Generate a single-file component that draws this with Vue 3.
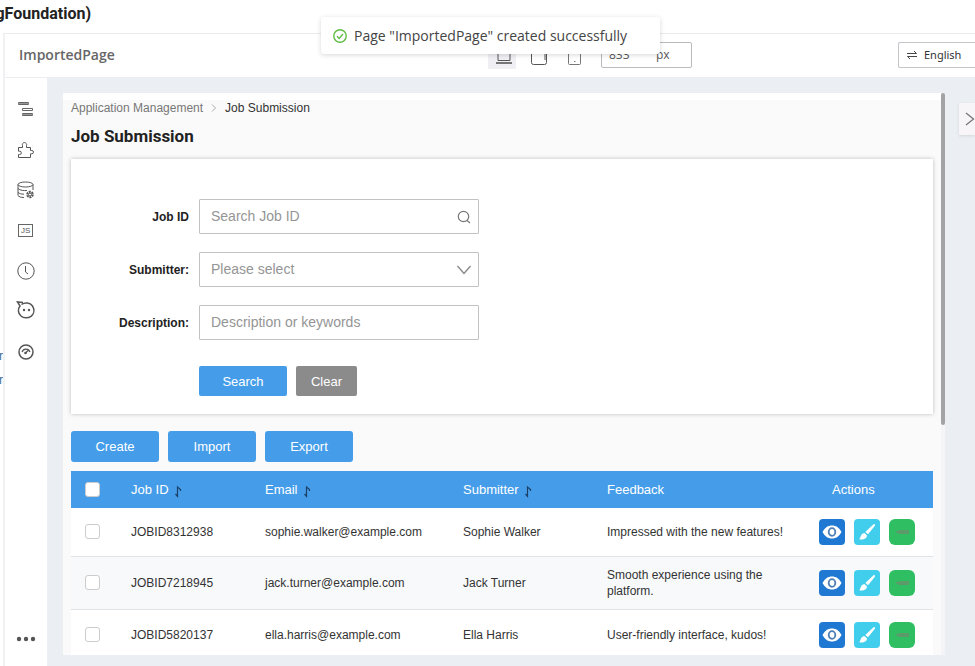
<script setup>
import { ref } from 'vue'

const jobId = ref('')
const submitter = ref('')
const description = ref('')
const width = ref('833')

const rows = [
  { id: 'JOBID8312938', email: 'sophie.walker@example.com', name: 'Sophie Walker', feedback: 'Impressed with the new features!' },
  { id: 'JOBID7218945', email: 'jack.turner@example.com', name: 'Jack Turner', feedback: 'Smooth experience using the platform.' },
  { id: 'JOBID5820137', email: 'ella.harris@example.com', name: 'Ella Harris', feedback: 'User-friendly interface, kudos!' }
]
const sortable = ['Job ID', 'Email', 'Submitter']
</script>

<template>
  <div class="shell">
    <header class="topbar"><span class="project">gFoundation)</span></header>
    <div class="body">
      <aside class="tree"><span>r</span><span>r</span></aside>
      <div class="designer">
        <div class="toolbar">
          <h2 class="page-name">ImportedPage</h2>
          <div class="devices">
            <button class="device active" type="button" aria-label="Desktop">
              <svg width="18" height="18" viewBox="0 0 18 18" fill="none" stroke="#555"><path d="M3 2.5h12v11H3z" /><path d="M1 16h16" stroke-width="2" stroke="#777" /></svg>
            </button>
            <button class="device" type="button" aria-label="Tablet">
              <svg width="18" height="18" viewBox="0 0 18 18" fill="none" stroke="#555"><rect x="1.500" y="2.500" width="15" height="15" rx="2" /><path d="M15 7v6" stroke-width="1" /></svg>
            </button>
            <button class="device" type="button" aria-label="Phone">
              <svg width="18" height="18" viewBox="0 0 18 18" fill="none" stroke="#777"><rect x="3.500" y="1.500" width="12" height="16" rx="1" /><path d="M9 14.500h1.500" /></svg>
            </button>
            <div class="size"><input v-model="width" aria-label="Width" /><span>px</span></div>
          </div>
          <div class="lang-area">
            <button class="lang" type="button">
              <svg width="10" height="10" viewBox="0 0 10 10" fill="none" stroke="#444"><path d="M0 3.500h9.500L7 1M10 6.500H.5L3 9" /></svg>
              English
            </button>
          </div>
        </div>
        <div class="workspace">
          <nav class="rail">
            <button type="button" aria-label="Outline">
              <svg width="20" height="20" viewBox="0 0 20 20" fill="none" stroke="#666"><path d="M2.500 2.500h10v2h-10zM6.500 8.500h10v2h-10zM6.500 13.500h10v2h-10z" /><path d="M2.500 3.500h10M6.500 14.500h10" stroke="#999" /></svg>
            </button>
            <button type="button" aria-label="Components">
              <svg width="20" height="20" viewBox="0 0 20 20" fill="none" stroke="#555"><path d="M2.500 7.500h4V5.700a2.200 2.200 0 1 1 4 0v1.800h4v3h1.300a1.500 1.500 0 0 1 0 3.300h-1.300v3.700h-12v-3h1.200a1.600 1.600 0 0 0 0-3.300H2.500z" /></svg>
            </button>
            <button type="button" aria-label="Data sources">
              <svg width="20" height="20" viewBox="0 0 20 20" fill="none" stroke="#555"><ellipse cx="9.500" cy="4.500" rx="7.500" ry="2.500" /><path d="M2 4.500v11c1 1.300 3 2 6 2M17 4.500V10M2 8.500c2 2 6 2.300 9 2M2 12.500c1.500 1 3 1.700 6 1.700" /><circle cx="14" cy="14.500" r="2.800" stroke-width="2" stroke-dasharray="2 .9" /><circle cx="14" cy="14.500" r="1.500" /></svg>
            </button>
            <button type="button" aria-label="Scripts">
              <svg width="20" height="20" viewBox="0 0 20 20" fill="none" stroke="#666"><rect x="2.500" y="4.500" width="14" height="12" /><text x="5" y="13" font-size="8" fill="#555" stroke="none" font-family="Liberation Sans, sans-serif">JS</text></svg>
            </button>
            <button type="button" aria-label="History">
              <svg width="20" height="20" viewBox="0 0 20 20" fill="none" stroke="#555"><circle cx="10" cy="11" r="8.200" /><path d="M9.500 6v6l2.500 2" /></svg>
            </button>
            <button type="button" aria-label="Assistant">
              <svg width="20" height="20" viewBox="0 0 20 20" fill="none" stroke="#555" stroke-width="1.500"><path d="M5.500 4.500C9 2 14 2.500 16.500 6c2.500 4 1.300 8-1.500 10.300-3 2.200-7.500 2-10-.3C2 13.500 1.500 9 4 6L1.500 2l5.500.5" /><circle cx="8" cy="10" r="1.200" fill="#555" stroke="none" /><circle cx="13" cy="10" r="1.200" fill="#555" stroke="none" /></svg>
            </button>
            <button type="button" aria-label="Performance">
              <svg width="20" height="20" viewBox="0 0 20 20" fill="none" stroke="#555"><circle cx="10" cy="12" r="7" stroke-width="1.500" /><path d="M6 12a4.200 4.200 0 0 1 8 0M9.500 13l3-3" stroke-width="1.200" /><circle cx="9.500" cy="13" r="1.300" fill="#555" stroke="none" /></svg>
            </button>
            <button class="more" type="button" aria-label="More">
              <svg width="20" height="20" viewBox="0 0 20 20" fill="#555"><circle cx="3" cy="10" r="2.200" /><circle cx="10" cy="10" r="2.200" /><circle cx="17" cy="10" r="2.200" /></svg>
            </button>
          </nav>
          <div class="canvas">
            <main class="page">
              <nav class="crumbs">
                <a href="#">Application Management</a>
                <svg width="6" height="8" viewBox="0 0 6 8" fill="none" stroke="#aaa"><path d="M1 .5L4.500 4 1 7.500" /></svg>
                <span>Job Submission</span>
              </nav>
              <h1>Job Submission</h1>
              <form class="card" @submit.prevent>
                <div class="field">
                  <label for="job">Job ID</label>
                  <div class="control">
                    <input id="job" v-model="jobId" placeholder="Search Job ID" />
                    <svg width="14" height="14" viewBox="0 0 14 14" fill="none" stroke="#777" stroke-width="1.200"><circle cx="6.500" cy="6.500" r="5.200" /><path d="M10 10.500l3 2.500" /></svg>
                  </div>
                </div>
                <div class="field">
                  <label for="sub">Submitter:</label>
                  <div class="control">
                    <select id="sub" v-model="submitter">
                      <option value="">Please select</option>
                      <option v-for="r in rows" :key="r.id">{{ r.name }}</option>
                    </select>
                    <svg width="14" height="14" viewBox="0 0 14 14" fill="none" stroke="#888" stroke-width="1.300"><path d="M.5 3L7 10.500 13.500 3" /></svg>
                  </div>
                </div>
                <div class="field">
                  <label for="desc">Description:</label>
                  <div class="control">
                    <input id="desc" v-model="description" placeholder="Description or keywords" />
                  </div>
                </div>
                <div class="form-actions">
                  <button class="btn search" type="submit">Search</button>
                  <button class="btn clear" type="reset">Clear</button>
                </div>
              </form>
              <div class="bulk">
                <button class="btn" type="button">Create</button>
                <button class="btn" type="button">Import</button>
                <button class="btn" type="button">Export</button>
              </div>
              <table>
                <colgroup>
                  <col class="c-check" /><col class="c-id" /><col class="c-email" /><col class="c-name" /><col /><col class="c-actions" />
                </colgroup>
                <thead>
                  <tr>
                    <th class="check"><input type="checkbox" aria-label="Select all" /></th>
                    <th v-for="s in sortable" :key="s">
                      <span class="sort">{{ s }}
                        <svg width="8" height="14" viewBox="0 0 8 14" fill="none" stroke="#1c3f66" stroke-width="1.200"><path d="M1.500 10l2 2.300V3l3 2.500v1.500" /></svg>
                      </span>
                    </th>
                    <th>Feedback</th>
                    <th class="actions-head">Actions</th>
                  </tr>
                </thead>
                <tbody>
                  <tr v-for="r in rows" :key="r.id">
                    <td class="check"><input type="checkbox" :aria-label="'Select ' + r.id" /></td>
                    <td>{{ r.id }}</td>
                    <td>{{ r.email }}</td>
                    <td>{{ r.name }}</td>
                    <td>{{ r.feedback }}</td>
                    <td>
                      <div class="acts">
                        <button class="act view" type="button" aria-label="View">
                          <svg width="20" height="14" viewBox="0 0 20 14"><path d="M.5 7C3 2.500 6 .5 10 .5s7 2 9.500 6.500C17 11.500 14 13.500 10 13.500S3 11.500.5 7z" fill="#fff" /><ellipse cx="10" cy="7" rx="3.300" ry="3.800" fill="#fff" stroke="#4b7fb5" stroke-width="1.800" /></svg>
                        </button>
                        <button class="act edit" type="button" aria-label="Edit">
                          <svg width="18" height="18" viewBox="0 0 18 18" fill="#fff"><path d="M15.500 1.200c1-.6 2 .4 1.400 1.500L10 11.300 7.300 8.900zM6.300 10l2.600 2.200c.2 2.600-2 4.500-6.600 4.300-.8 0-1-.5-.6-1C2.900 14.300 2.300 10.900 6.300 10z" /></svg>
                        </button>
                        <button class="act run" type="button" aria-label="Run">
                          <svg width="14" height="6" viewBox="0 0 14 6" fill="#5d9a6a"><path d="M0 2.500L5 1h9v4H4z" /></svg>
                        </button>
                      </div>
                    </td>
                  </tr>
                </tbody>
              </table>
            </main>
            <div class="scroll"><span class="thumb"></span></div>
            <button class="expand" type="button" aria-label="Expand panel">
              <svg width="10" height="14" viewBox="0 0 10 14" fill="none" stroke="#777" stroke-width="1.300"><path d="M1 1l7.500 6L1 13" /></svg>
            </button>
          </div>
        </div>
      </div>
    </div>
    <div class="toast" role="status">
      <svg width="14" height="14" viewBox="0 0 14 14" fill="none" stroke="#5ebd45" stroke-width="1.400"><circle cx="7" cy="7" r="6.200" /><path d="M4 7.200l2.200 2.200L10 5" /></svg>
      Page "ImportedPage" created successfully
    </div>
  </div>
</template>

<style>
body { margin: 0; }
</style>

<style scoped>
* { box-sizing: border-box; }
button, input, select { font: inherit; margin: 0; }
button { border: 0; padding: 0; background: none; cursor: pointer; }
svg { display: block; flex: none; }
.shell { position: relative; display: flex; flex-direction: column; height: 100vh; overflow: hidden; background: #fff; font-family: "Liberation Sans", Arial, sans-serif; font-size: 13px; color: #333; }
.topbar { flex: none; height: 33px; padding-top: 4px; }
.project { display: flex; justify-content: flex-end; width: 91px; overflow: hidden; font: 700 16px/20px Roboto, sans-serif; color: #222; }
.body { flex: 1; display: flex; min-height: 0; }
.tree { flex: none; width: 3px; padding-top: 311px; display: flex; flex-direction: column; align-items: flex-end; overflow: hidden; font-size: 12px; line-height: 24px; color: #3f6a92; }
.designer { flex: 1; min-width: 0; display: flex; flex-direction: column; border-left: 2px solid #f0f1f3; border-top: 1px solid #ececef; }
.toolbar { flex: none; display: flex; align-items: center; height: 43px; padding: 0 0 2px 14px; }
.page-name { flex: 1; margin: 0; font: 600 14px/20px "Open Sans", sans-serif; color: #666; }
.devices { display: flex; align-items: center; gap: 7px; }
.device { display: flex; align-items: center; justify-content: flex-end; padding: 2px 3px 0 0; width: 28px; height: 28px; }
.device.active { background: #f0f0f4; }
.size { display: flex; align-items: center; width: 91px; height: 26px; margin-left: 8px; border: 1px solid #bbb; border-radius: 2px; font: 12px/18px "Open Sans", sans-serif; color: #555; }
.size input { width: 54px; border: 0; padding: 0 0 0 7px; background: none; color: inherit; outline: none; }
.lang-area { width: 283px; display: flex; justify-content: flex-end; }
.lang { display: flex; align-items: center; gap: 7px; width: 77px; height: 26px; padding-left: 8px; border: 1px solid #c4c6ca; border-right: 0; border-radius: 2px 0 0 2px; font: 11px/18px "Noto Sans", sans-serif; color: #333; }
.workspace { flex: 1; min-height: 0; display: flex; border-top: 1px solid #ececf1; }
.rail { flex: none; width: 42px; display: flex; flex-direction: column; align-items: center; gap: 20px; padding: 22px 0 17px; }
.rail button { height: 20px; }
.rail .more { margin-top: auto; }
.canvas { flex: 1; min-width: 0; display: flex; align-items: flex-start; background: #ebeef2; padding: 15px 0 11px 16px; height: 100%; }
.page { flex: 1; min-width: 0; height: 100%; overflow: hidden; background: #fafafa; border-top: 7px solid #fff; padding: 0 8px; }
.crumbs { display: flex; align-items: center; gap: 8px; height: 16px; margin-bottom: 10px; font-size: 12px; line-height: 16px; }
.crumbs a { color: #777; text-decoration: none; }
h1 { margin: 0 0 13px; font: 700 17px/20px Roboto, sans-serif; color: #222; }
.card { background: #fff; padding: 40px 0 18px; margin-bottom: 17px; box-shadow: 0 0 4px rgba(0, 0, 0, .25); display: flex; flex-direction: column; gap: 18px; }
.field { display: flex; align-items: center; gap: 10px; }
.field label { width: 118px; text-align: right; font-weight: 700; font-size: 12px; line-height: 16px; color: #222; }
.control { width: 280px; height: 35px; display: flex; align-items: center; border: 1px solid #c2c2c2; border-radius: 1px; padding-right: 7px; }
.control input, .control select { flex: 1; min-width: 0; height: 100%; border: 0; outline: none; background: none; padding: 0 0 2px 11px; appearance: none; font-size: 14px; line-height: 18px; color: #959595; }
.control input::placeholder { color: #959595; opacity: 1; }
.form-actions { display: flex; gap: 9px; padding: 8px 0 0 128px; }
.btn { width: 88px; height: 31px; background: #459de9; color: #fff; border-radius: 3px; }
.form-actions .btn { height: 30px; border-radius: 2px; }
.form-actions .clear { width: 61px; background: #8b8b8b; }
.bulk { display: flex; gap: 9px; margin-bottom: 9px; }
table { width: 100%; border-collapse: collapse; table-layout: fixed; }
.c-check { width: 48px; }
.c-id { width: 134px; }
.c-email { width: 198px; }
.c-name { width: 144px; }
.c-actions { width: 126px; }
th { height: 37px; padding: 0 12px; background: #459de9; color: #fff; font-weight: 400; text-align: left; }
.sort { display: flex; align-items: flex-end; gap: 5px; line-height: 16px; }
th.actions-head { padding-left: 25px; }
td { height: 51px; padding: 8px 12px; font-size: 12px; line-height: 16px; background: #fff; border-bottom: 1px solid #e2e3e5; overflow-wrap: break-word; }
td:last-child { padding-right: 0; }
tbody tr:first-child td { height: 48px; }
tbody tr:nth-child(2) td { height: 53px; background: #f8f9fb; }
th.check, td.check { padding: 0 0 0 14px; }
.check input { display: block; appearance: none; width: 15px; height: 15px; background: #fff; border: 1px solid #ccc; border-radius: 3px; }
.acts { display: flex; gap: 9px; }
.act { display: flex; align-items: center; justify-content: center; width: 26px; height: 26px; border-radius: 4px; }
.view { background: #1f78d1; }
.edit { background: #41cdec; }
.run { background: #2fbf62; border-radius: 6px; }
.scroll { flex: none; width: 4px; height: 100%; background: #f5f5f7; }
.thumb { display: block; height: 59%; background: #a3a3a5; border-radius: 2px; }
.expand { flex: none; width: 16px; height: 32px; margin: 10px 0 0 14px; display: flex; align-items: center; justify-content: flex-end; background: #f7f5f7; box-shadow: 0 1px 3px rgba(0, 0, 0, .1); }
.toast { position: absolute; top: 17px; left: 321px; height: 37px; width: 339px; padding-left: 12px; display: flex; align-items: center; gap: 7px; background: #fff; border-radius: 3px; box-shadow: 0 1px 5px rgba(0, 0, 0, .16); font: 14px/20px "Open Sans", sans-serif; color: #444; white-space: nowrap; }
</style>
